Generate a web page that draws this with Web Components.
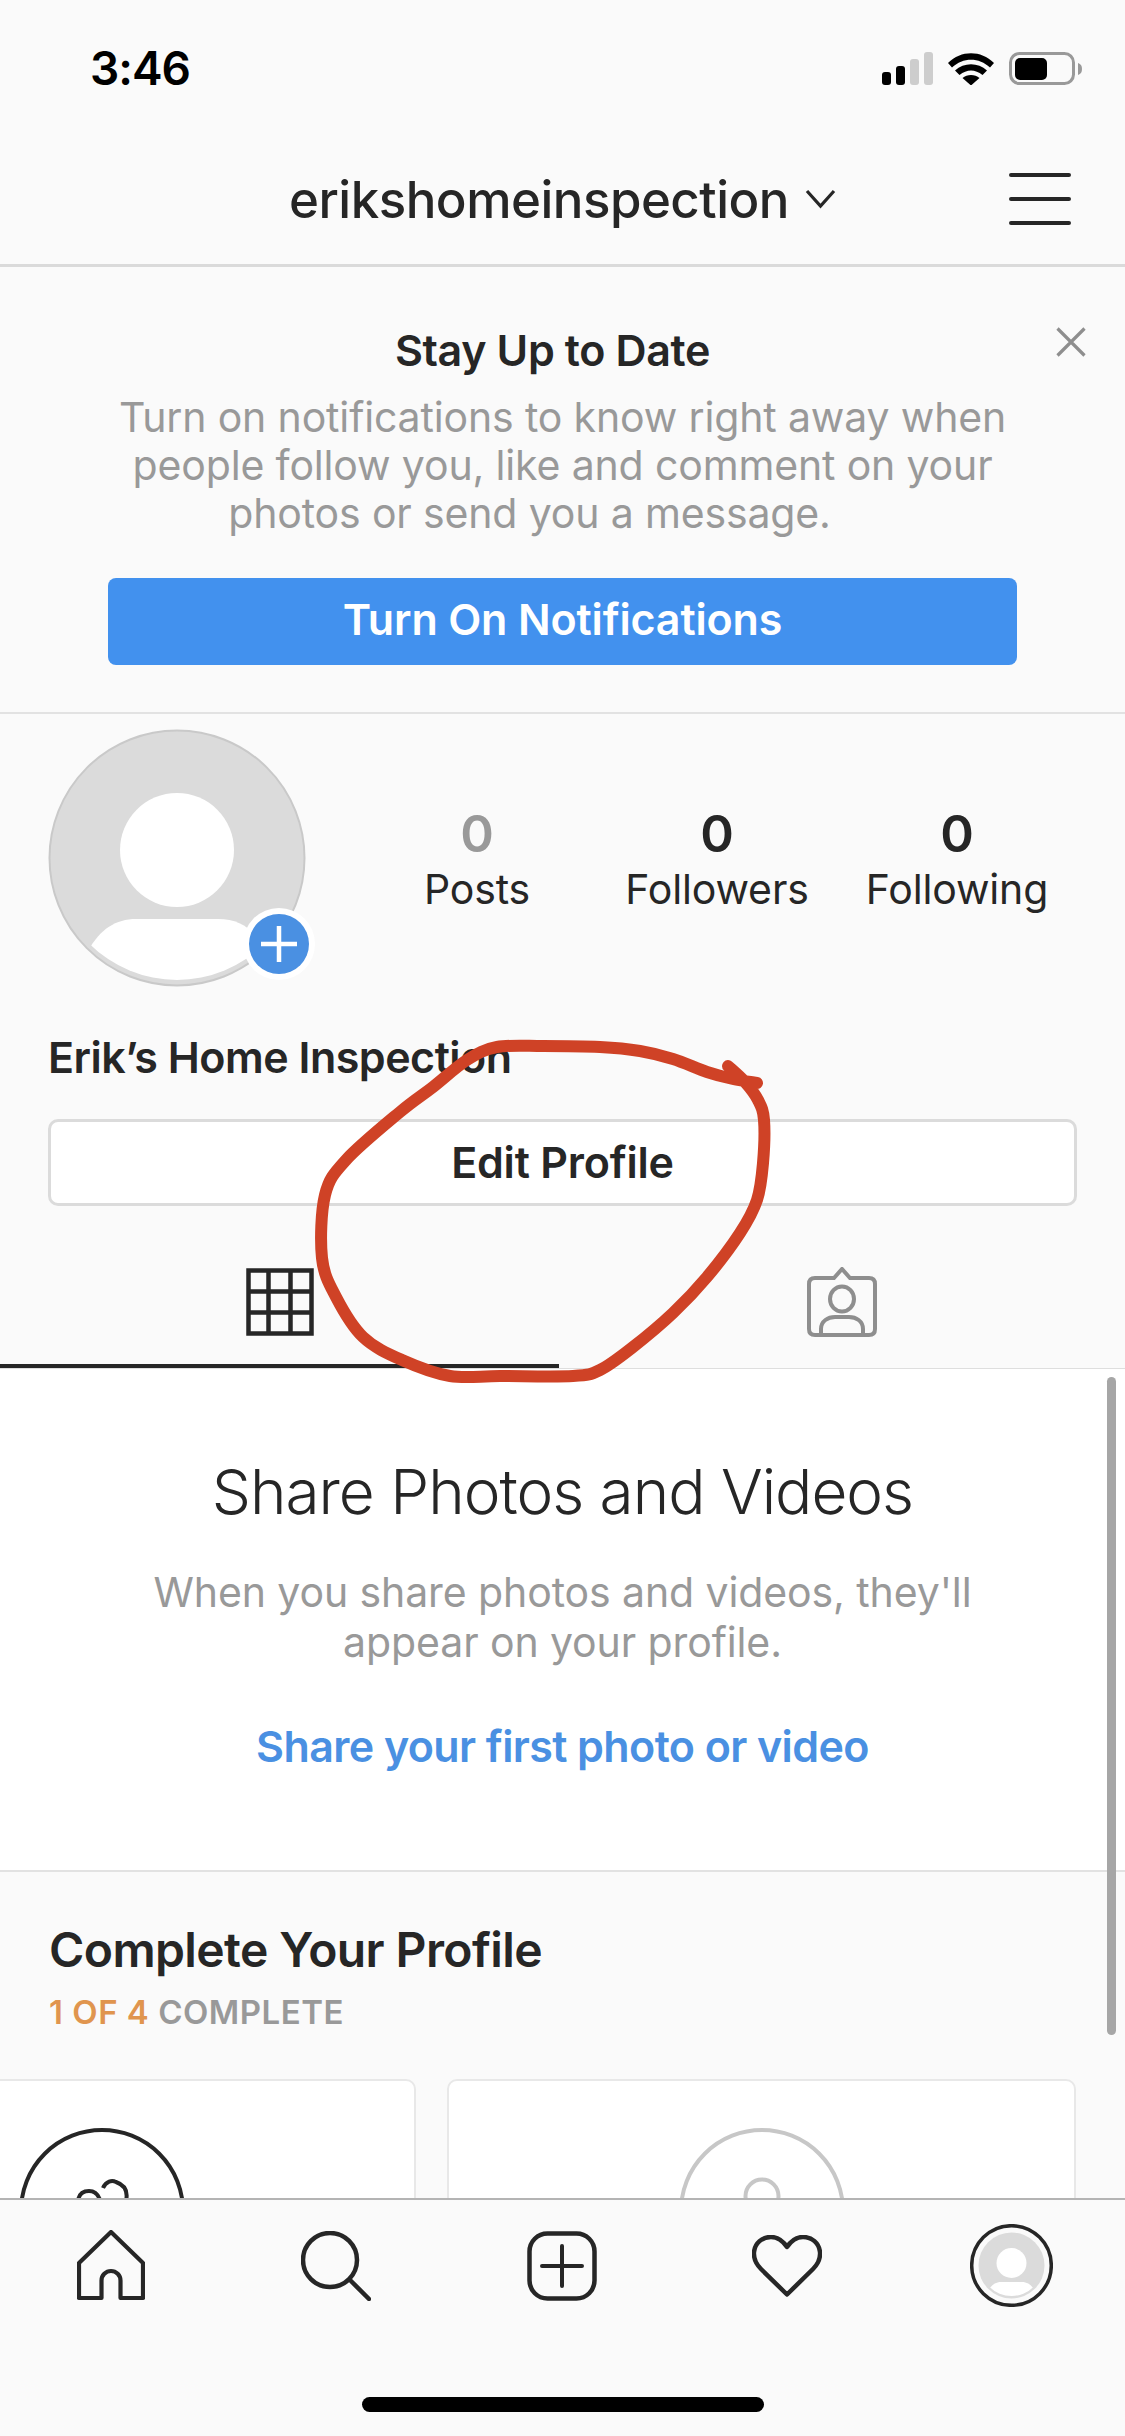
<!DOCTYPE html>
<html lang="en">
<head>
<meta charset="utf-8">
<title>Profile</title>
<style>
  html, body { margin: 0; padding: 0; }
  body {
    width: 1125px;
    height: 2436px;
    overflow: hidden;
    display: flex;
    flex-direction: column;
    position: relative;
    background: #fafafa;
    font-family: Inter, "Liberation Sans", sans-serif;
    color: #262626;
  }
</style>
</head>
<body>
<status-bar time="3:46"></status-bar>
<nav-bar name="erikshomeinspection"></nav-bar>
<scroll-area>
  <notify-banner title="Stay Up to Date" action="Turn On Notifications">
    Turn on notifications to know right away when<br>
    people follow you, like and comment on your<br>
    <span style="padding-right:66px">photos or send you a message.</span>
  </notify-banner>
  <profile-summary name="Erik’s Home Inspection">
    <stat-item value="0" label="Posts" muted></stat-item>
    <stat-item value="0" label="Followers"></stat-item>
    <stat-item value="0" label="Following"></stat-item>
  </profile-summary>
  <profile-tabs></profile-tabs>
  <empty-state title="Share Photos and Videos" link="Share your first photo or video">
    When you share photos and videos, they'll<br>appear on your profile.
  </empty-state>
  <complete-profile title="Complete Your Profile" done="1 OF 4" rest="COMPLETE"></complete-profile>
</scroll-area>
<tab-bar></tab-bar>
<red-mark></red-mark>

<script>
class StatusBar extends HTMLElement {
    constructor() {
        super();
        this.shadowDOM = this.attachShadow({mode: 'open'});
    }

    connectedCallback() {
        this.shadowDOM.innerHTML = `
        <style>
          :host {
            display: flex;
            justify-content: space-between;
            align-items: flex-start;
            height: 134px;
            flex: none;
            box-sizing: border-box;
            padding: 42px 43px 0 90px;
          }
          .time {
            font-size: 46px;
            line-height: 52px;
            font-weight: 600;
            color: #000;
            letter-spacing: -1px;
          }
          svg { display: block; margin-top: 10px; }
        </style>
        <div class="time">${this.getAttribute('time')}</div>
        <svg width="200" height="33" viewBox="0 0 200 33">
          <rect x="0" y="20" width="9" height="13" rx="3" fill="#000"/>
          <rect x="14" y="14" width="9" height="19" rx="3" fill="#000"/>
          <rect x="28" y="7" width="9" height="26" rx="3" fill="#cdcdcd"/>
          <rect x="42" y="0" width="9" height="33" rx="3" fill="#cdcdcd"/>
          <path d="M66 11 C79 -2 99 -2 112 11 L108 15.500 C97 5 81 5 70 15.500 Z" fill="#000"/>
          <path d="M73 18.500 C82 10 96 10 105 18.500 L100.500 23 C93 17 85 17 77.500 23 Z" fill="#000"/>
          <path d="M80.500 26 C85 22 93 22 97.500 26 L89 33.500 Z" fill="#000"/>
          <rect x="128.500" y="1.500" width="63" height="30" rx="9" fill="none" stroke="#999" stroke-width="3"/>
          <rect x="133" y="6" width="32" height="22" rx="5" fill="#000"/>
          <path d="M196 11 C199 12 200 14 200 17 C200 20 199 22 196 23 Z" fill="#999"/>
        </svg>
        `;
    }
}

class NavBar extends HTMLElement {
    constructor() {
        super();
        this.shadowDOM = this.attachShadow({mode: 'open'});
    }

    connectedCallback() {
        this.shadowDOM.innerHTML = `
        <style>
          :host {
            display: grid;
            grid-template-columns: 1fr auto 1fr;
            align-items: center;
            height: 133px;
            flex: none;
            box-sizing: border-box;
            border-bottom: 3px solid #dadada;
          }
          .title {
            grid-column: 2;
            display: flex;
            align-items: center;
            gap: 16px;
            font-size: 51px;
            font-weight: 500;
            letter-spacing: -0.5px;
            color: #262626;
          }
          .menu { justify-self: end; margin-right: 54px; display: flex; flex-direction: column; gap: 19.500px; width: 62px; }
          .menu span { display: block; height: 4.500px; border-radius: 3px; background: #262626; }
        </style>
        <div class="title">
          <span>${this.getAttribute('name')}</span>
          <svg width="31" height="20" viewBox="0 0 31 20"><path d="M2 2 L15.500 17 L29 2" fill="none" stroke="#262626" stroke-width="3.200"/></svg>
        </div>
        <div class="menu"><span></span><span></span><span></span></div>
        `;
    }
}

class ScrollArea extends HTMLElement {
    constructor() {
        super();
        this.shadowDOM = this.attachShadow({mode: 'open'});
    }

    connectedCallback() {
        this.shadowDOM.innerHTML = `
        <style>
          :host {
            display: block;
            flex: 1;
            min-height: 0;
            overflow: hidden;
            position: relative;
          }
          .thumb {
            position: absolute;
            right: 9px;
            top: 1110px;
            width: 9px;
            height: 658px;
            border-radius: 5px;
            background: #a6a6a6;
          }
        </style>
        <slot></slot>
        <div class="thumb"></div>
        `;
    }
}

class NotifyBanner extends HTMLElement {
    constructor() {
        super();
        this.shadowDOM = this.attachShadow({mode: 'open'});
    }

    connectedCallback() {
        this.shadowDOM.innerHTML = `
        <style>
          :host {
            display: block;
            position: relative;
            box-sizing: border-box;
            height: 447px;
            padding: 53px 108px 0;
            border-bottom: 2px solid #e2e2e2;
            text-align: center;
          }
          .title {
            font-size: 43px;
            line-height: 60px;
            font-weight: 600;
            letter-spacing: -0.35px;
            padding-right: 20px;
          }
          .text {
            margin: 13px -30px 0;
            font-size: 41px;
            line-height: 48px;
            color: #999;
            letter-spacing: -0.15px;
            white-space: nowrap;
          }
          .button {
            margin-top: 41px;
            height: 87px;
            line-height: 83px;
            border-radius: 8px;
            background: #4291ee;
            color: #fff;
            font-size: 43px;
            font-weight: 600;
            letter-spacing: -0.15px;
          }
          svg { position: absolute; left: 1056px; top: 60px; }
        </style>
        <div class="title">${this.getAttribute('title')}</div>
        <div class="text"><slot></slot></div>
        <div class="button">${this.getAttribute('action')}</div>
        <svg width="30" height="30" viewBox="0 0 30 30"><path d="M1.500 1.500 L28.500 28.500 M28.500 1.500 L1.500 28.500" stroke="#8e8e8e" stroke-width="3.200"/></svg>
        `;
    }
}

class StatItem extends HTMLElement {
    constructor() {
        super();
        this.shadowDOM = this.attachShadow({mode: 'open'});
    }

    connectedCallback() {
        this.shadowDOM.innerHTML = `
        <style>
          :host {
            display: flex;
            flex-direction: column;
            align-items: center;
            width: 240px;
          }
          .value {
            font-size: 51px;
            line-height: 56px;
            font-weight: 600;
            color: ${this.hasAttribute('muted') ? '#999' : '#262626'};
          }
          .label {
            margin-top: -1px;
            font-size: 41px;
            line-height: 56px;
            letter-spacing: -0.15px;
            color: #262626;
          }
        </style>
        <div class="value">${this.getAttribute('value')}</div>
        <div class="label">${this.getAttribute('label')}</div>
        `;
    }
}

class ProfileSummary extends HTMLElement {
    constructor() {
        super();
        this.shadowDOM = this.attachShadow({mode: 'open'});
    }

    connectedCallback() {
        this.shadowDOM.innerHTML = `
        <style>
          :host {
            display: block;
            box-sizing: border-box;
            height: 490px;
            padding: 15px 48px 0;
          }
          .top { display: flex; align-items: flex-start; height: 258px; }
          .avatar { position: relative; width: 258px; height: 258px; flex: none; margin-right: 51px; }
          .avatar svg { display: block; overflow: visible; }
          .stats { display: flex; padding-top: 77px; }
          .name {
            margin-top: 45px;
            font-size: 43px;
            line-height: 50px;
            font-weight: 600;
            letter-spacing: -0.5px;
          }
          .edit {
            margin-top: 37px;
            width: 1029px;
            height: 87px;
            line-height: 81px;
            box-sizing: border-box;
            background: #fff;
            border: 3px solid #dbdbdb;
            border-radius: 10px;
            text-align: center;
            font-size: 43px;
            font-weight: 600;
            letter-spacing: -0.2px;
          }
        </style>
        <div class="top">
          <div class="avatar">
            <svg width="258" height="258" viewBox="0 0 258 258">
              <defs><clipPath id="a"><circle cx="129" cy="127" r="124"/></clipPath></defs>
              <circle cx="129" cy="129" r="127.500" fill="#dbdbdb" stroke="#c9c9c9" stroke-width="2"/>
              <ellipse cx="129" cy="121" rx="57" ry="57" fill="#fff"/>
              <path clip-path="url(#a)" d="M40 222 C52 200 68 190 88 190 H170 C192 190 206 200 218 222 V262 H40 Z" fill="#fff"/>
              <circle cx="231" cy="215" r="36" fill="#fff"/>
              <circle cx="231" cy="215" r="30" fill="#4a90e2"/>
              <path d="M231 197 V233 M213 215 H249" stroke="#fff" stroke-width="4.500"/>
            </svg>
          </div>
          <div class="stats"><slot></slot></div>
        </div>
        <div class="name">${this.getAttribute('name')}</div>
        <div class="edit">Edit Profile</div>
        `;
    }
}

class ProfileTabs extends HTMLElement {
    constructor() {
        super();
        this.shadowDOM = this.attachShadow({mode: 'open'});
    }

    connectedCallback() {
        this.shadowDOM.innerHTML = `
        <style>
          :host {
            display: flex;
            height: 165px;
            box-sizing: border-box;
            border-bottom: 1.500px solid #dedede;
          }
          .tab {
            flex: 1;
            display: flex;
            justify-content: center;
            padding-top: 64px;
            box-sizing: border-box;
            height: 164px;
          }
          .tab.on { flex: none; width: 559px; border-bottom: 4px solid #262626; }
          svg { display: block; }
        </style>
        <div class="tab on">
          <svg width="68" height="68" viewBox="0 0 68 68">
            <path d="M2.500 2.500 H65.500 V65.500 H2.500 Z M22.500 2.500 V65.500 M44.500 2.500 V65.500 M2.500 23.500 H65.500 M2.500 44.500 H65.500" fill="none" stroke="#262626" stroke-width="4.500"/>
          </svg>
        </div>
        <div class="tab">
          <svg width="70" height="71" viewBox="0 0 70 71" style="margin-top:-1px">
            <path d="M8 11 H27 L35 2 L43 11 H62 C66 11 68 13 68 17 V62 C68 66 66 68 62 68 H8 C4 68 2 66 2 62 V17 C2 13 4 11 8 11 Z" fill="none" stroke="#8e8e8e" stroke-width="4"/>
            <ellipse cx="35" cy="32" rx="12" ry="12.500" fill="none" stroke="#8e8e8e" stroke-width="4"/>
            <path d="M14 67 V62 C14 54 21 50 28 50 H42 C49 50 56 54 56 62 V67" fill="none" stroke="#8e8e8e" stroke-width="4"/>
          </svg>
        </div>
        `;
    }
}

class EmptyState extends HTMLElement {
    constructor() {
        super();
        this.shadowDOM = this.attachShadow({mode: 'open'});
    }

    connectedCallback() {
        this.shadowDOM.innerHTML = `
        <style>
          :host {
            display: block;
            box-sizing: border-box;
            height: 503px;
            background: #fff;
            border-bottom: 2px solid #e2e2e2;
            text-align: center;
            padding-top: 84px;
          }
          .title {
            font-size: 62px;
            line-height: 78px;
            font-weight: 300;
            letter-spacing: -1px;
          }
          .text {
            margin-top: 36px;
            font-size: 41px;
            line-height: 50px;
            color: #999;
            letter-spacing: -0.1px;
          }
          .link {
            margin-top: 54px;
            font-size: 43px;
            line-height: 50px;
            font-weight: 600;
            letter-spacing: -0.6px;
            color: #4a90e2;
          }
        </style>
        <div class="title">${this.getAttribute('title')}</div>
        <div class="text"><slot></slot></div>
        <div class="link">${this.getAttribute('link')}</div>
        `;
    }
}

class CompleteProfile extends HTMLElement {
    constructor() {
        super();
        this.shadowDOM = this.attachShadow({mode: 'open'});
    }

    connectedCallback() {
        this.shadowDOM.innerHTML = `
        <style>
          :host { display: block; padding-top: 50px; }
          .title {
            margin-left: 49px;
            font-size: 48px;
            line-height: 56px;
            font-weight: 600;
            letter-spacing: -0.6px;
          }
          .sub {
            margin: 14px 0 0 49px;
            font-size: 33px;
            line-height: 40px;
            font-weight: 600;
            letter-spacing: 0.5px;
            color: #999;
          }
          .sub b { font-weight: 600; color: #e0954e; }
          .cards { display: flex; gap: 31px; margin: 47px 0 0 -213px; }
          .card {
            flex: none;
            width: 629px;
            height: 400px;
            box-sizing: border-box;
            padding-top: 47px;
            background: #fff;
            border: 2px solid #e8e8e8;
            border-radius: 10px;
          }
          svg { display: block; margin: 0 auto; }
        </style>
        <div class="title">${this.getAttribute('title')}</div>
        <div class="sub"><b>${this.getAttribute('done')}</b> ${this.getAttribute('rest')}</div>
        <div class="cards">
          <div class="card">
            <svg width="166" height="166" viewBox="0 0 166 166">
              <circle cx="83" cy="83" r="81" fill="none" stroke="#262626" stroke-width="4"/>
              <path d="M59 73 C60 65 65 63 70 63 C75 63 79 66 81 72 M84 60 C87 53 93 52 97 54 C106 57 109 64 107 73" fill="none" stroke="#262626" stroke-width="4"/>
            </svg>
          </div>
          <div class="card">
            <svg width="166" height="166" viewBox="0 0 166 166">
              <circle cx="83" cy="83" r="81" fill="none" stroke="#c7c7c7" stroke-width="4"/>
              <circle cx="83" cy="68" r="16.500" fill="none" stroke="#c7c7c7" stroke-width="4"/>
            </svg>
          </div>
        </div>
        `;
    }
}

class TabBar extends HTMLElement {
    constructor() {
        super();
        this.shadowDOM = this.attachShadow({mode: 'open'});
    }

    connectedCallback() {
        this.shadowDOM.innerHTML = `
        <style>
          :host {
            display: block;
            flex: none;
            height: 238px;
            box-sizing: border-box;
            background: #fafafa;
            border-top: 2px solid #b4b4b4;
            position: relative;
          }
          svg { display: block; flex: none; }
          .icons {
            display: flex;
            align-items: center;
            gap: 156px;
            padding: 24px 0 0 77px;
            height: 83px;
          }
          .home-line {
            width: 402px;
            height: 15px;
            border-radius: 8px;
            background: #000;
            margin: 90px 0 0 362px;
          }
        </style>
        <div class="icons">
          <svg width="68" height="71" viewBox="0 0 68 71">
            <path d="M2 68 V33 L34 2 L66 33 V68 H43.500 V50.500 A9.500 9.500 0 0 0 24.500 50.500 V68 Z" fill="none" stroke="#262626" stroke-width="4.200" stroke-linejoin="round"/>
          </svg>
          <svg width="70" height="70" viewBox="0 0 70 70">
            <circle cx="29" cy="29" r="27" fill="none" stroke="#262626" stroke-width="4.500"/>
            <path d="M49 49 L68 68" stroke="#262626" stroke-width="4.500" stroke-linecap="round"/>
          </svg>
          <svg width="70" height="70" viewBox="0 0 70 70">
            <rect x="2.500" y="2.500" width="65" height="65" rx="18" fill="none" stroke="#262626" stroke-width="4.500"/>
            <path d="M35 15 V55 M15 35 H55" stroke="#262626" stroke-width="4" stroke-linecap="round"/>
          </svg>
          <svg width="70" height="62" viewBox="0 0 70 62" style="margin-left:-1px">
            <path d="M35 59.500 L9 34 C3 28 1.500 23 2 17 C3 8 10 2 19 2 C26 2 31 6 35 12 C39 6 44 2 51 2 C60 2 67 8 68 17 C68.500 23 67 28 61 34 Z" fill="none" stroke="#262626" stroke-width="4.500" stroke-linejoin="round"/>
          </svg>
          <svg width="83" height="83" viewBox="0 0 83 83" style="margin-left:-8px">
            <defs><clipPath id="b"><circle cx="41.500" cy="41" r="31"/></clipPath></defs>
            <circle cx="41.500" cy="41.500" r="39.800" fill="none" stroke="#262626" stroke-width="3.500"/>
            <circle cx="41.500" cy="41.500" r="33" fill="#dbdbdb"/>
            <circle cx="41.500" cy="39" r="15" fill="#fff"/>
            <path clip-path="url(#b)" d="M18 68 C20 62 25 58 31 58 H52 C58 58 63 62 65 68 V80 H18 Z" fill="#fff"/>
          </svg>
        </div>
        <div class="home-line"></div>
        `;
    }
}

class RedMark extends HTMLElement {
    constructor() {
        super();
        this.shadowDOM = this.attachShadow({mode: 'open'});
    }

    connectedCallback() {
        // hand drawn ring, points run through a catmull-rom curve
        const pts = [[757,1083],[733,1079],[707,1072],[673,1059],[640,1051],[600,1047],[543,1046],[497,1047],[467,1060],
            [433,1087],[400,1112],[346,1160],[325,1195],[322,1258],[336,1297],[363,1337],[402,1360],[450,1376],
            [500,1376],[573,1376],[600,1370],[633,1347],[673,1313],[707,1277],[740,1233],[757,1200],[763,1163],
            [764,1120],[758,1100],[745,1082],[728,1066]];
        let d = `M${pts[0][0]} ${pts[0][1]}`;
        for (let i = 0; i < pts.length - 1; i++) {
            const a = pts[Math.max(i - 1, 0)], b = pts[i], c = pts[i + 1], e = pts[Math.min(i + 2, pts.length - 1)];
            d += ` C${b[0] + (c[0] - a[0]) / 6} ${b[1] + (c[1] - a[1]) / 6} ${c[0] - (e[0] - b[0]) / 6} ${c[1] - (e[1] - b[1]) / 6} ${c[0]} ${c[1]}`;
        }
        this.shadowDOM.innerHTML = `
        <style>
          :host { position: absolute; left: 0; top: 0; pointer-events: none; }
          svg { display: block; }
        </style>
        <svg width="1125" height="2436" viewBox="0 0 1125 2436">
          <path d="${d}" fill="none" stroke="#cf4226" stroke-width="12" stroke-linecap="round" stroke-linejoin="round"/>
        </svg>
        `;
    }
}

customElements.define('status-bar', StatusBar);
customElements.define('nav-bar', NavBar);
customElements.define('scroll-area', ScrollArea);
customElements.define('notify-banner', NotifyBanner);
customElements.define('stat-item', StatItem);
customElements.define('profile-summary', ProfileSummary);
customElements.define('profile-tabs', ProfileTabs);
customElements.define('empty-state', EmptyState);
customElements.define('complete-profile', CompleteProfile);
customElements.define('tab-bar', TabBar);
customElements.define('red-mark', RedMark);
</script>
</body>
</html>
